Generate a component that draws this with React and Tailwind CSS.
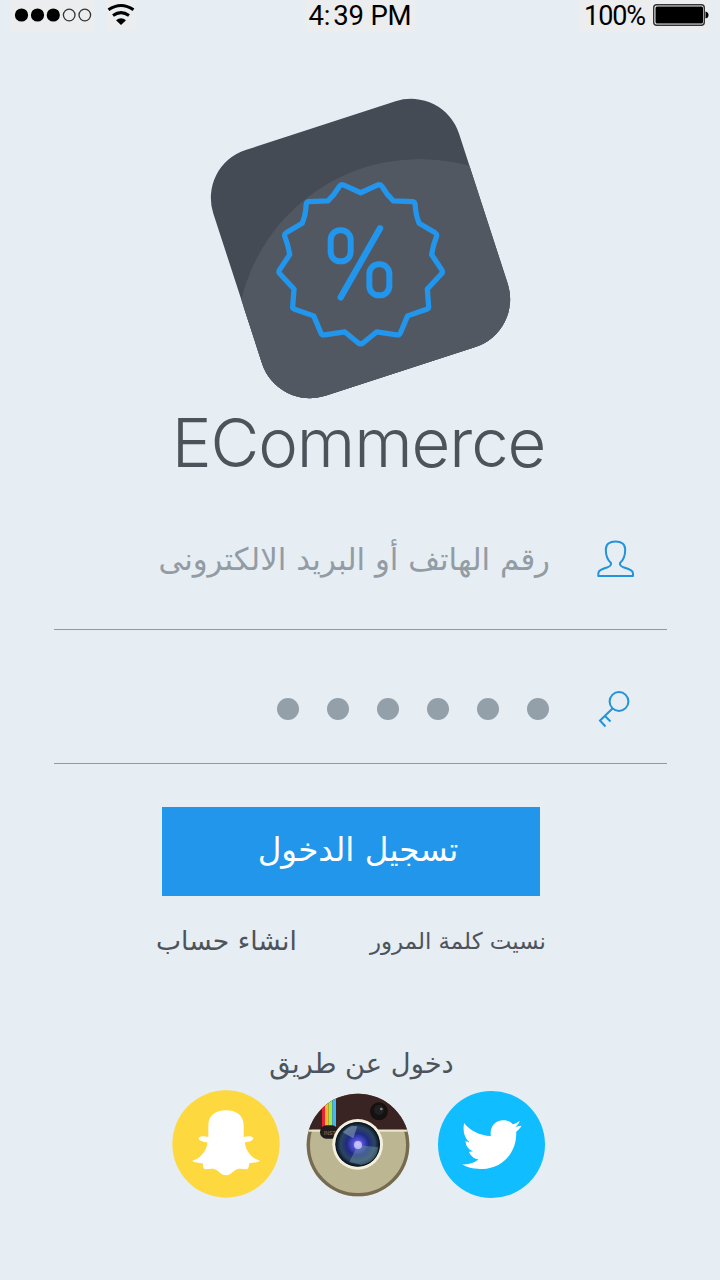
import React from "react";

const arabic = "font-['DejaVu_Sans',sans-serif] whitespace-nowrap";

function StatusBar() {
  return (
    <header className="grid h-8 grid-cols-3 items-start">
      <div className="flex">
        <svg className="ml-2 h-8 w-[130px]" viewBox="8 0 130 32">
          <path d="M10 0H94V32H10ZM106 0H136V30H106Z" fill="#ebedee" />
          <circle cx="21.5" cy="15" r="6.6" />
          <circle cx="37.5" cy="15" r="6.6" />
          <circle cx="53.3" cy="15" r="6.6" />
          <g fill="none" stroke="#333" strokeWidth="1.3">
            <circle cx="69.2" cy="15" r="5.8" />
            <circle cx="84.8" cy="15" r="5.8" />
          </g>
          <g fill="none" stroke="#000" strokeWidth="3">
            <path d="M108.500 9.800Q121 1.200 133.500 9.800" />
            <path d="M113 15.500Q121 9.700 129 15.500" />
          </g>
          <path d="M116 20.200Q121 16.400 126 20.200L121 25Z" />
        </svg>
      </div>
      <div className="flex justify-center">
        <span className="bg-[#ebedee] px-1 font-[Roboto,sans-serif] text-[27.5px] leading-8 tracking-[-0.2px] whitespace-nowrap text-black">4:<span className="ml-[3px]">39 PM</span></span>
      </div>
      <div className="flex justify-end pr-[11px]">
        <div className="flex bg-[#ebedee] pl-1">
          <span className="font-[Roboto,sans-serif] text-[27px] leading-8 tracking-[-1.1px] text-black">100%</span>
          <svg className="ml-[7px] h-8 w-[57px]" viewBox="652 0 57 32">
            <rect x="653.700" y="4.700" width="50.600" height="20.600" rx="3" fill="#eee" stroke="#333" strokeWidth="1.400" />
            <rect x="655.500" y="6.500" width="47.500" height="17" rx="1.500" />
            <path d="M705.500 11.500Q708.500 12 708.500 15T705.500 18.500Z" />
          </svg>
        </div>
      </div>
    </header>
  );
}

function Logo() {
  return (
    <svg className="h-[320px] w-[320px]" viewBox="0 0 960 960">
      <defs>
        <clipPath id="tile">
          <rect x="94" y="88" width="775" height="775" rx="151" transform="rotate(-18 481.500 475.500)" />
        </clipPath>
      </defs>
      <g clipPath="url(#tile)">
        <rect width="960" height="960" fill="#444b55" />
        <circle cx="659" cy="757" r="550" fill="#525862" />
        <path d="M100 960V650L960 650V960Z" fill="#525862" />
      </g>
      <g fill="none" stroke="#2196ec" strokeLinejoin="round" strokeLinecap="round">
        <path
          strokeWidth="16"
          transform="translate(482 523) scale(.985) translate(-482 -522)"
          d="M482 304L533 281Q542 277 548 286Q563 312 582 329L640 331Q647 332 648 339Q649 370 660 397L709 426Q715 430 713 437Q703 462 698 492L729 539Q733 546 729 550L685 597L689 650Q690 657 683 659L625 679L603 731Q600 738 592 737L530 728L490 761Q482 767 474 761L434 728L372 737Q364 738 361 731L339 679L281 659Q274 657 275 650L279 597L235 550Q231 546 235 539L266 492Q261 462 251 437Q249 430 255 426L304 397Q315 370 316 339Q317 332 324 331L382 329Q401 312 416 286Q422 277 431 281Z"
        />
        <rect x="392" y="421" width="60" height="93" rx="28" strokeWidth="18" />
        <rect x="508" y="523" width="60" height="93" rx="28" strokeWidth="18" />
        <path d="M422 622L540 415" strokeWidth="19" />
      </g>
    </svg>
  );
}

function UserIcon() {
  return (
    <svg className="h-[42px] w-[42px]" viewBox="595 537 42 42" fill="none" stroke="#2393dc" strokeWidth="2" strokeLinejoin="round">
      <path d="M615.500 541.500C609.500 541.500 605.800 544.500 605.800 549.500C605.800 556 607.500 560 611 563C611.500 565.500 610 566.500 607 567.500C601 569.500 598.300 570.500 598.300 573.500V576H633V573.500C633 570.500 630 569.500 624 567.500C621 566.500 619.500 565.500 620 563C623.500 560 625.200 556 625.200 549.500C625.200 544.500 621.500 541.500 615.500 541.500Z" />
    </svg>
  );
}

function KeyIcon() {
  return (
    <svg className="h-[42px] w-[42px]" viewBox="595 688 42 42" fill="none" stroke="#2393dc" strokeWidth="2">
      <circle cx="619" cy="701.500" r="9.400" />
      <path d="M612.500 708.500L599.300 721.200M599.500 720L605.500 726.500M604.500 715.500L610.500 721.500" />
    </svg>
  );
}

function SnapchatButton() {
  return (
    <svg className="h-[108px] w-[108px]" viewBox="11 5 324 324">
      <circle cx="173" cy="167" r="161" fill="#fdd83f" />
      <path
        fill="#fff"
        d="M173 66C141 66 120 82 120 112V146C108 143 97 143 92 148C88 156 103 161 117 162C117 181 104 201 87 211L72 217C77 223 94 223 103 225C105 233 104 241 111 243C125 241 139 239 149 248C157 256 165 261 173 261C181 261 189 256 197 248C207 239 221 241 235 243C242 241 241 233 243 225C252 223 269 223 275 217L260 211C243 201 230 181 230 162C244 161 258 156 254 148C249 143 238 143 226 146V112C226 82 205 66 173 66Z"
      />
    </svg>
  );
}

function InstagramButton() {
  return (
    <svg className="h-[104px] w-[104px]" viewBox="18 24 312 312">
      <defs>
        <clipPath id="camera"><circle cx="174" cy="180" r="154" /></clipPath>
        <radialGradient id="lens">
          <stop offset="0" stopColor="#c0b6ff" />
          <stop offset=".2" stopColor="#5452da" />
          <stop offset=".5" stopColor="#202a83" />
          <stop offset=".78" stopColor="#2d465f" />
          <stop offset="1" stopColor="#071223" />
        </radialGradient>
      </defs>
      <g clipPath="url(#camera)">
        <rect width="360" height="360" fill="#bdb692" />
        <circle cx="174" cy="180" r="150" fill="none" stroke="#756b50" strokeWidth="12" />
        <rect width="360" height="134" fill="#3a2423" />
        <rect y="134" width="360" height="6" fill="#eee7d0" />
        <path d="M66 0H75V126H66Z" fill="#e82435" />
        <path d="M75 0H86V126H75Z" fill="#ffb52e" />
        <path d="M86 0H97V126H86Z" fill="#9cee43" />
        <path d="M97 0H108V126H97Z" fill="#43b9f1" />
      </g>
      <rect x="60" y="121" width="55" height="40" rx="19" fill="#211b1c" />
      <text x="71" y="149" fontSize="16" fill="#8c8179" className="font-['Liberation_Sans',sans-serif]">INST</text>
      <circle cx="237" cy="79" r="27" fill="#151111" />
      <circle cx="237" cy="75" r="15" fill="#202020" />
      <circle cx="244" cy="72" r="4" fill="#888" />
      <circle cx="173" cy="178" r="76" fill="#f5f0dc" />
      <circle cx="173" cy="178" r="67" fill="#081421" />
      <circle cx="173" cy="178" r="66" fill="url(#lens)" />
      <path d="M160 160L128 142L143 128L155 122L172 124Z" fill="#8ba5be" opacity=".55" />
      <path d="M173 180L235 187Q230 232 184 240L148 231Z" fill="#709ca5" opacity=".45" />
      <circle cx="174" cy="180" r="12" fill="#d0caff" opacity=".8" />
    </svg>
  );
}

function TwitterButton() {
  return (
    <svg className="h-[107px] w-[107px]" viewBox="8.500 8 321 321">
      <circle cx="169" cy="168.500" r="160.500" fill="#10bdff" />
      <path
        fill="#fff"
        d="M87 104C103 126 133 142 167 143C163 116 180 96 204 96C218 96 226 100 233 108C241 106 249 101 254 98C251 106 247 111 241 115L259 112C255 119 250 125 243 130C246 190 203 242 141 242C116 243 95 237 81 228C103 229 118 224 130 213C115 211 106 201 101 190C106 191 110 190 114 189C99 183 92 173 91 157C95 160 99 161 103 162C87 148 82 126 87 104Z"
      />
    </svg>
  );
}

export default function App() {
  return (
    <main className="flex h-[1280px] w-[720px] flex-col overflow-hidden bg-[#e6edf3] text-[#4d535b]">
      <StatusBar />
      <div className="mt-[58px] flex justify-center"><Logo /></div>
      <h1 className="-mt-2 flex h-20 items-center justify-center pt-px pr-[3px] font-[Inter,sans-serif] text-[67px] leading-none font-light tracking-[-1.1px]">ECommerce</h1>

      <form className="mr-[53px] ml-[54px] flex flex-col" dir="rtl" onSubmit={(e) => e.preventDefault()}>
        <label className="flex h-[148px] items-start border-b border-[#8c9ba8] pt-[55px] pr-[30px]">
          <UserIcon />
          <span className={`${arabic} mt-px mr-[45px] text-[30.8px] leading-[42px] text-[#929ca4]`}>رقم الهاتف أو البريد الالكترونى</span>
        </label>
        <label className="flex h-[134px] items-start border-b border-[#8c9ba8] pt-[58px] pr-[30px]">
          <KeyIcon />
          <span className="mt-[10px] mr-[46px] flex gap-7">
            {[0, 1, 2, 3, 4, 5].map((n) => <i key={n} className="size-[22px] rounded-full bg-[#939fa9]" />)}
          </span>
        </label>
        <button className={`${arabic} mt-[43px] mr-[127px] flex h-[89px] w-[378px] items-center justify-center bg-[#2196eb] pb-[3px] pl-[14px] text-[32.6px] text-white`}>
          تسجيل الدخول
        </button>
      </form>

      <nav className="flex h-[90px] items-center justify-between pr-[174px] pl-[156px]" dir="ltr">
        <a className={`${arabic} text-[26.6px]`} dir="rtl">انشاء حساب</a>
        <a className={`${arabic} text-[22.9px]`} dir="rtl">نسيت كلمة المرور</a>
      </nav>

      <section className="mt-[52px] flex flex-col">
        <h2 className={`${arabic} flex h-[52px] items-center justify-center pl-[3px] text-[27.3px]`} dir="rtl">دخول عن طريق</h2>
        <div className="flex items-center pl-[172px]">
          <SnapchatButton />
          <div className="mt-[2px] ml-[26px] flex"><InstagramButton /></div>
          <div className="ml-[28px] flex"><TwitterButton /></div>
        </div>
      </section>
    </main>
  );
}
